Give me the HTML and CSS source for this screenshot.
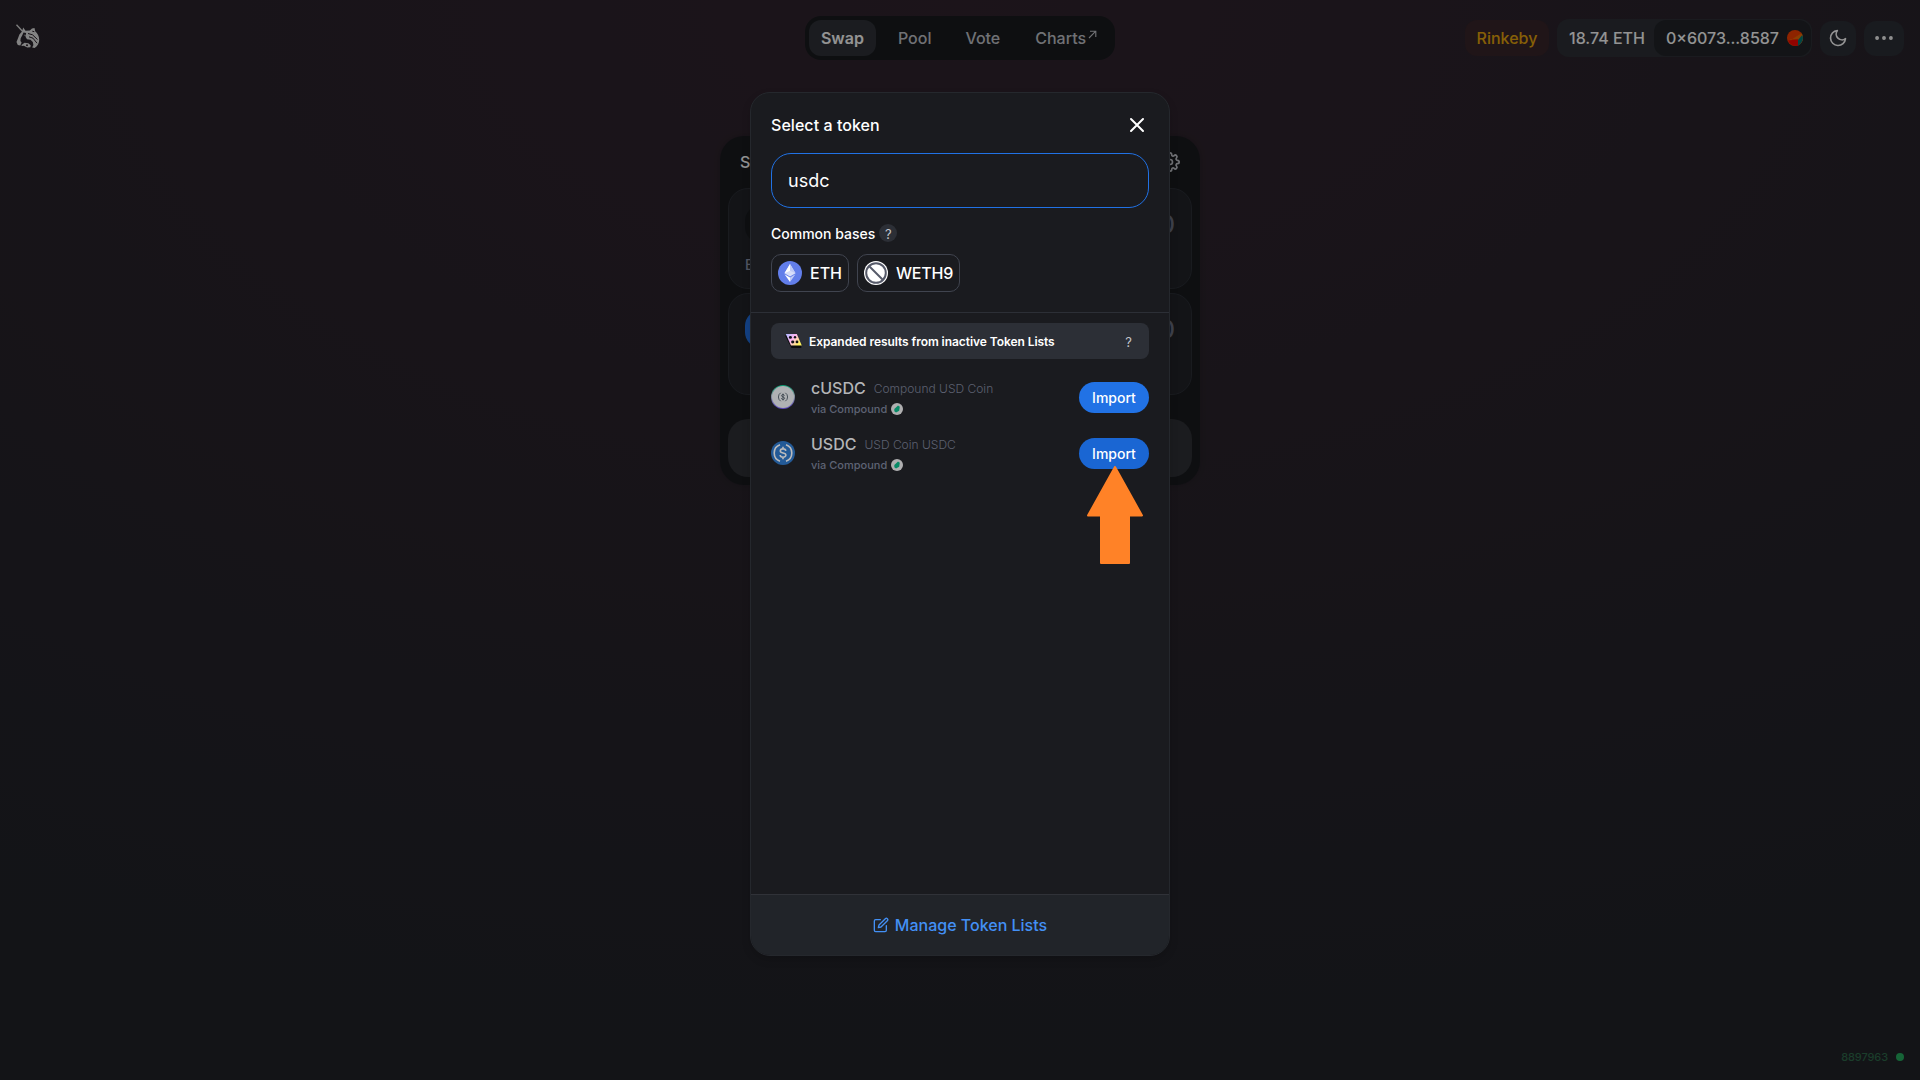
FILE: index.html
```html
<!DOCTYPE html>
<html lang="en">
<head>
<meta charset="utf-8">
<title>Swap</title>
<link rel="stylesheet" href="styles.css">
</head>
<body>
<div class="page">
  <header class="header">
    <a class="logo"><svg width="24" height="26" viewBox="0 0 24 26">
      <path fill="none" stroke="#ddd" stroke-width="1.300" d="m.5.700 6.200 6.800"/>
      <path fill="#e4e4e4" d="M6 7.500 7.200 3.600 9.500 6.800l4.300-.3 2.200-2 2.500-.6.700 3.300c2.400 2 4 5 4 8.500 0 3.600-1.700 6.300-4.600 8.300l-2.400-.4 1.200-2.600-.6-3-2.300-2.200-3.500-.5-1.500-2.500.6-3.800-2.600-.4-1.200 2.700-1.600 3-.3 2.600L5.600 18.500l-1.300 3-2.500-.6L.5 18l1.600-4 1.300-3.500Z"/>
      <path fill="none" stroke="#2b2029" stroke-width="1" d="m12 9.500 4.500 1.300 5 4.700M13 12.800l4 1.400 4 5M16.300 7.200l2 .5"/>
      <path fill="#e4e4e4" d="m5.500 21 3-2.200 3.800.4 2.400 2-.3 2-3.200.3-3.300-1.700-2.200.3Z"/>
      <circle cx="11" cy="21.200" r="1" fill="#2b2029"/>
      <path fill="#e4e4e4" d="m8 10.800 2 .3-1 1Z"/>
    </svg></a>
    <nav class="nav">
      <a class="nav-link active">Swap</a><a class="nav-link">Pool</a><a class="nav-link">Vote</a><a class="nav-link charts">Charts<svg width="9" height="9" viewBox="0 0 9 9"><path d="M1 8 7.300 1.700M2 1.200h5.800V7" fill="none" stroke="currentColor" stroke-width="1.100"/></svg></a>
    </nav>
    <div class="controls">
      <span class="network">Rinkeby</span>
      <div class="account">
        <span class="balance">18.74 ETH</span>
        <span class="address">0×6073...8587
          <svg width="16" height="16" viewBox="0 0 16 16"><circle cx="8" cy="8" r="8" fill="#f73f01"/><path d="M1 11.800 14.500 3.300A8 8 0 0 1 11 15.400V9H4Z" fill="#f26a02"/><path d="M1 10.500 11 9.500V15.400A8 8 0 0 1 1 10.500Z" fill="#fa0600"/><path d="M15.300 5A8 8 0 0 1 11 15.400V10Z" fill="#017c79"/></svg>
        </span>
      </div>
      <button class="icon-btn"><svg width="20" height="20" viewBox="0 0 24 24"><path d="M21 12.790A9 9 0 1 1 11.210 3 7 7 0 0 0 21 12.790z"/></svg></button>
      <button class="icon-btn more"><svg width="20" height="20" viewBox="0 0 24 24"><circle cx="12" cy="12" r="1.300"/><circle cx="20.300" cy="12" r="1.300"/><circle cx="3.700" cy="12" r="1.300"/></svg></button>
    </div>
  </header>
  <main class="swap-card">
    <div class="swap-head"><span>Swap</span>
      <svg class="gear" width="20" height="20" viewBox="0 0 24 24"><circle cx="12" cy="12" r="3"/><path d="M19.400 15a1.650 1.650 0 0 0 .33 1.820l.06.06a2 2 0 0 1-2.830 2.830l-.06-.06a1.650 1.650 0 0 0-2.800 1.170V21a2 2 0 0 1-4 0v-.09a1.650 1.650 0 0 0-2.900-1.080l-.06.06a2 2 0 0 1-2.830-2.830l.06-.06A1.650 1.650 0 0 0 3.090 14H3a2 2 0 0 1 0-4h.09A1.650 1.650 0 0 0 4.600 7.200l-.06-.06a2 2 0 0 1 2.830-2.830l.06.06A1.650 1.650 0 0 0 10 3.090V3a2 2 0 0 1 4 0v.09a1.650 1.650 0 0 0 2.900 1.280l.06-.06a2 2 0 0 1 2.830 2.830l-.06.06A1.650 1.650 0 0 0 20.910 10H21a2 2 0 0 1 0 4h-.09a1.650 1.650 0 0 0-1.510 1z"/></svg>
    </div>
    <section class="amount">
      <div class="amount-row"><span class="token-pick"></span><span class="amount-value">0</span></div>
      <div class="balance-line">B</div>
    </section>
    <section class="amount">
      <div class="amount-row"><span class="token-pick blue"></span><span class="amount-value">0</span></div>
    </section>
    <div class="swap-submit"></div>
  </main>
  <div class="block-number">8897963<i></i></div>
</div>

<div class="overlay">
  <div class="modal">
    <div class="modal-top">
      <div class="modal-title"><span>Select a token</span>
        <svg width="24" height="24" viewBox="0 0 24 24"><path d="M18 6 6 18M6 6l12 12"/></svg>
      </div>
      <div class="search">usdc</div>
      <div class="bases-label"><span>Common bases</span><span class="help">?</span></div>
      <div class="bases">
        <div class="base"><svg width="24" height="24" viewBox="0 0 24 24"><circle cx="12" cy="12" r="12" fill="#627eea"/><path d="m12 3-5.500 9.200L12 15.400l5.500-3.200Z" fill="#fff" opacity=".75"/><path d="M12 3v6.700l5.500 2.500ZM12 16.500V21l5.500-7.700Z" fill="#c0cbf6"/><path d="m6.500 12.200 5.500-2.500V3ZM12 21v-4.500l-5.500-3.200Z" fill="#fff"/></svg>ETH</div>
        <div class="base weth"><svg width="24" height="24" viewBox="0 0 24 24"><circle cx="12" cy="12" r="12" fill="#fff"/><circle cx="12" cy="12" r="9.800" fill="none" stroke="#565a69" stroke-width="2"/><path d="m5 5 14 14" stroke="#565a69" stroke-width="2"/></svg>WETH9</div>
      </div>
    </div>
    <div class="results">
      <div class="expanded">
        <svg width="17" height="14" viewBox="0 0 17 14"><defs><linearGradient id="lists" x1="0" y1="0" x2="1" y2=".6"><stop offset="0" stop-color="#a8b8ff"/><stop offset=".5" stop-color="#ffb5ef"/><stop offset="1" stop-color="#fff45c"/></linearGradient></defs><path d="M0 1.500h4l8 9h4.300V14H6.500Z" fill="#0b0b0d"/><path d="M.8 0h11l5 11.500H6Z" fill="url(#lists)"/><g fill="#111217"><ellipse cx="5.400" cy="3.400" rx="1.500" ry="1.300"/><ellipse cx="10" cy="3.200" rx="1.200" ry="1.200"/><ellipse cx="7.700" cy="8" rx="1.600" ry="1.400"/><ellipse cx="12" cy="7.900" rx="1.400" ry="1.300"/></g></svg>
        <span>Expanded results from inactive Token Lists</span><em>?</em>
      </div>
      <div class="token">
        <svg class="faded" width="24" height="24" viewBox="0 0 24 24"><defs><linearGradient id="ring" x1="0" y1="0" x2="0" y2="1"><stop offset="0" stop-color="#00d395"/><stop offset=".45" stop-color="#b8c6d4"/><stop offset="1" stop-color="#7357ff"/></linearGradient></defs><circle cx="12" cy="12" r="12" fill="url(#ring)"/><circle cx="12" cy="12" r="11" fill="#eef1f3"/><g fill="none" stroke="#3a4654" stroke-width=".8"><path d="M9.700 7.800a5 5 0 0 0 0 8.400M14.300 7.800a5 5 0 0 1 0 8.400"/><path d="M13.500 10.600c-.3-1.500-3-1.400-3 .1 0 1.600 3.100.9 3.100 2.600 0 1.500-3 1.600-3.200-.1M12 8.600v6.800"/></g></svg>
        <div class="token-info">
          <div class="token-name">cUSDC<small>Compound USD Coin</small></div>
          <div class="via">via Compound<svg class="faded" width="12" height="12" viewBox="0 0 12 12"><circle cx="6" cy="6" r="6" fill="#eee"/><path d="m3.300 6 3.700-3.500 1.800 1.300-.6 3.900L5 9.500l-1.700-1.300Z" fill="#00b985"/></svg></div>
        </div>
        <button class="import">Import</button>
      </div>
      <div class="token">
        <svg class="faded" width="24" height="24" viewBox="0 0 24 24"><circle cx="12" cy="12" r="12" fill="#2775ca"/><g fill="none" stroke="#fff" stroke-width="1.600"><path d="M9 3.800a8.700 8.700 0 0 0 0 16.400M15 3.800a8.700 8.700 0 0 1 0 16.400"/><path d="M14.800 9.800c-.3-2.700-5.500-2.600-5.500.2 0 2.900 5.600 1.100 5.600 4.100 0 2.800-5.600 2.800-5.800-.1M12 5.700v2M12 16.300v2"/></g></svg>
        <div class="token-info">
          <div class="token-name">USDC<small>USD Coin USDC</small></div>
          <div class="via">via Compound<svg class="faded" width="12" height="12" viewBox="0 0 12 12"><circle cx="6" cy="6" r="6" fill="#eee"/><path d="m3.300 6 3.700-3.500 1.800 1.300-.6 3.900L5 9.500l-1.700-1.300Z" fill="#00b985"/></svg></div>
        </div>
        <div class="import-wrap"><button class="import pressed">Import</button>
          <svg class="pointer" width="56" height="98" viewBox="0 0 56 98"><path d="M28 1 55 49.500H42v47.500H14V49.500H1Z" fill="#ff8227" stroke="#ff8227" stroke-width="2" stroke-linejoin="round"/></svg>
        </div>
      </div>
    </div>
    <div class="modal-foot">
      <svg width="16" height="16" viewBox="0 0 24 24"><path d="M11 4H4a2 2 0 0 0-2 2v14a2 2 0 0 0 2 2h14a2 2 0 0 0 2-2v-7"/><path d="M18.500 2.500a2.121 2.121 0 0 1 3 3L12 15l-4 1 1-4 9.500-9.500z"/></svg>
      <span>Manage Token Lists</span>
    </div>
  </div>
</div>
</body>
</html>
```
FILE: styles.css
```css
* { box-sizing: border-box; }
body { margin: 0; font: 500 16px/20px Inter, sans-serif; color: #fff; background: #212429; overflow: hidden; }
button { font: inherit; color: inherit; border: 0; padding: 0; }
svg { display: block; flex: none; }
.page { height: 1080px; position: relative; background: radial-gradient(1920px 1080px at 50% 0, #31242e, #212429); }

.header { display: grid; grid-template-columns: 1fr auto 1fr; align-items: center; height: 76px; padding: 0 16px; }
.logo svg { margin-top: -2px; }
.nav { display: flex; height: 44px; padding: 4px; border-radius: 16px; background: #191b1f; color: #c3c5cb; }
.nav-link { display: flex; align-items: center; height: 36px; margin-right: 10px; padding: 0 12px; border-radius: 12px; }
.nav-link.active { background: #2f3238; color: #fff; font-weight: 600; }
.nav-link.charts { margin: 0; padding: 0 14px 0 13px; }
.charts svg { margin: -7px 0 0 2px; }
.controls { display: flex; justify-content: flex-end; align-items: center; gap: 8px; }
.network { width: 84px; height: 36px; border-radius: 12px; line-height: 37px; text-align: center; color: #e9a70c; background: #38252a; }
.account { display: flex; align-items: center; width: 255px; height: 38px; padding-right: 1px; border-radius: 12px; background: #2d3036; }
.balance { flex: 1; padding-left: 12px; }
.address { display: flex; align-items: center; justify-content: space-between; width: 157px; height: 36px; padding: 0 8px 0 12px; border-radius: 12px; background: #212429; }
.icon-btn { display: grid; place-items: center; width: 36px; height: 35px; border-radius: 12px; background: #2c2f36; }
.icon-btn.more { width: 40px; }
.icon-btn svg, .gear { fill: none; stroke: #fff; stroke-width: 2; stroke-linecap: round; stroke-linejoin: round; }

.swap-card { width: 480px; height: 349px; margin: 60px auto 0; padding: 0 8px; border-radius: 24px; background: #191b1f; box-shadow: 0 0 6px rgba(0,0,0,.15); }
.swap-head { display: flex; justify-content: space-between; height: 52px; padding: 16px 12px 0; }
.gear { stroke: #c3c5cb; }
.amount { height: 101px; margin-bottom: 4px; padding: 16px; border: 1px solid #2c2f36; border-radius: 20px; background: #212429; }
.amount + .amount { height: 102px; margin-bottom: 24px; }
.amount-row { display: flex; justify-content: space-between; height: 38px; }
.token-pick { width: 110px; border-radius: 16px; background: #191b1f; }
.token-pick.blue { background: #2172e5; }
.amount-value { font-size: 24px; line-height: 40px; color: #6c7284; }
.balance-line { margin-top: 12px; font-size: 14px; color: #8f96ac; }
.swap-submit { height: 58px; border-radius: 20px; background: #2f3136; }
.block-number { position: absolute; right: 16px; bottom: 13px; display: flex; align-items: center; gap: 8px; font-size: 11px; letter-spacing: -.1px; color: #2f6a4b; }
.block-number i { width: 8px; height: 8px; border-radius: 50%; background: #27ae60; }

.overlay { position: absolute; inset: 0; display: flex; justify-content: center; align-items: flex-start; padding-top: 92px; background: rgba(0,0,0,.425); }
.modal { display: flex; flex-direction: column; width: 420px; height: 864px; border: 1px solid #25282d; border-radius: 20px; background: #1a1b1f; box-shadow: 0 4px 8px rgba(0,0,0,.15); overflow: hidden; }
.modal-top { height: 220px; padding: 20px; border-bottom: 1px solid #2c2f36; }
.modal-title { display: flex; justify-content: space-between; align-items: center; height: 24px; letter-spacing: .05px; }
.modal-title svg { fill: none; stroke: #fff; stroke-width: 2; stroke-linecap: round; }
.search { height: 55px; margin-top: 16px; padding: 0 16px; border: 1px solid #2172e5; border-radius: 20px; font-size: 18px; line-height: 54px; font-weight: 400; }
.bases-label { display: flex; align-items: center; gap: 4px; height: 18px; margin-top: 16px; font-size: 14px; }
.bases-label span:first-child { padding-top: 2px; }
.help { width: 18px; height: 18px; border-radius: 50%; background: #2c2f36; color: #c3c5cb; font-size: 13px; font-weight: 400; line-height: 20px; text-align: center; }
.bases { display: flex; gap: 8px; margin-top: 12px; }
.base { display: flex; align-items: center; gap: 8px; height: 38px; padding: 0 6px; border: 1px solid #40444f; border-radius: 10px; }
.base.weth { width: 103px; letter-spacing: -.2px; }

.results { flex: 1; padding: 10px 20px 0; }
.expanded { display: flex; align-items: center; height: 36px; margin-bottom: 10px; padding: 0 17px 0 14px; border-radius: 8px; background: #2c2f36; font-size: 12px; }
.expanded svg { margin-top: -1px; }
.expanded span { flex: 1; margin-left: 7px; padding-top: 2px; font-weight: 600; letter-spacing: -.06px; }
.expanded em { padding-top: 2px; font-style: normal; font-size: 13px; font-weight: 400; color: #c3c5cb; }
.token { display: flex; align-items: center; height: 56px; }
.token-info { flex: 1; margin-left: 16px; padding-top: 3px; }
.faded { opacity: .7; }
.token-name { display: flex; align-items: center; gap: 8px; height: 20px; color: #b4b5b7; }
.token-name small { padding-top: 1px; font-size: 12px; font-weight: 300; color: #5c6070; }
.via { display: flex; align-items: center; gap: 4px; height: 21px; font-size: 11px; color: #5e6374; }
.import { display: block; width: 70px; height: 31px; padding-top: 1px; border-radius: 16px; background: #2172e5; font-size: 14px; }
.import.pressed { background: #1a66d3; }
.import-wrap { position: relative; }
.pointer { position: absolute; left: 8px; top: 28px; }

.modal-foot { display: flex; justify-content: center; align-items: center; gap: 6px; height: 61px; border-top: 1px solid #303238; background: #212429; color: #4390f5; }
.modal-foot svg { fill: none; stroke: currentColor; stroke-width: 2; stroke-linecap: round; stroke-linejoin: round; }
```
